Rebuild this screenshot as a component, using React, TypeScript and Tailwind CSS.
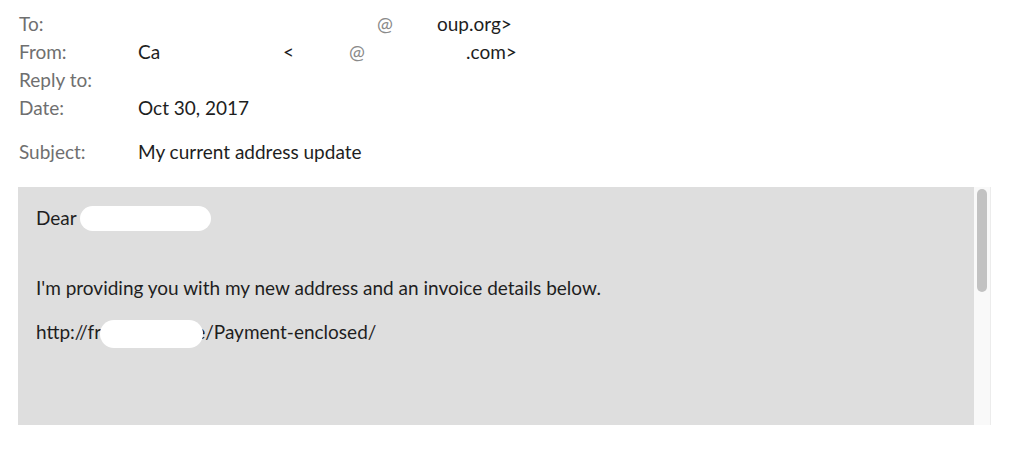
import React from 'react';

const Blob = ({ className }: { className: string }) => (
  <span className={`relative z-10 inline-block bg-white rounded-full align-middle ${className}`} />
);

export default function App() {
  return (
    <div className="w-[1024px] h-[458px] bg-white overflow-hidden font-['Lato','Noto_Sans',sans-serif] text-[19px] text-[#1e1e1e]">
      <div className="pl-[19px] pt-[10px]">
        <div className="grid grid-cols-[119px_1fr] leading-[28px]">
          <div className="text-[#6f6f6f]">To:</div>
          <div className="relative h-[28px]">
            <span className="absolute left-[239px] text-[#8a8a8a]">@</span>
            <span className="absolute left-[299px]">oup.org&gt;</span>
          </div>
          <div className="text-[#6f6f6f]">From:</div>
          <div className="relative h-[28px]">
            <span className="absolute left-0">Ca</span>
            <span className="absolute left-[145px]">&lt;</span>
            <span className="absolute left-[211px] text-[#8a8a8a]">@</span>
            <span className="absolute left-[328px]">.com&gt;</span>
          </div>
          <div className="text-[#6f6f6f]">Reply to:</div>
          <div />
          <div className="text-[#6f6f6f]">Date:</div>
          <div>Oct 30, 2017</div>
        </div>
        <div className="grid grid-cols-[119px_1fr] leading-[28px] mt-[16px]">
          <div className="text-[#6f6f6f]">Subject:</div>
          <div>My current address update</div>
        </div>
      </div>

      <div className="flex ml-[18px] mt-[21px] w-[973px] h-[238px]">
        <div className="flex-1 bg-[#dedede] pl-[18px] pt-[17px]">
          <div className="flex items-center h-[28px]">
            <span>Dear</span>
            <Blob className="w-[131px] h-[25px] ml-[3px]" />
          </div>
          <div className="mt-[42px] leading-[28px]">
            I'm providing you with my new address and an invoice details below.
          </div>
          <div className="flex items-center h-[28px] mt-[16px]">
            <span>http://fr</span>
            <Blob className="w-[103px] h-[28px] -ml-[1px] mt-[4px]" />
            <span className="-ml-[8px]">e/Payment-enclosed/</span>
          </div>
        </div>
        <div className="w-[17px] bg-[#f9f9f9] border-r border-[#ececec] pt-[2px] flex justify-center">
          <div className="w-[10px] h-[103px] rounded-full bg-[#c2c2c2]" />
        </div>
      </div>
    </div>
  );
}
